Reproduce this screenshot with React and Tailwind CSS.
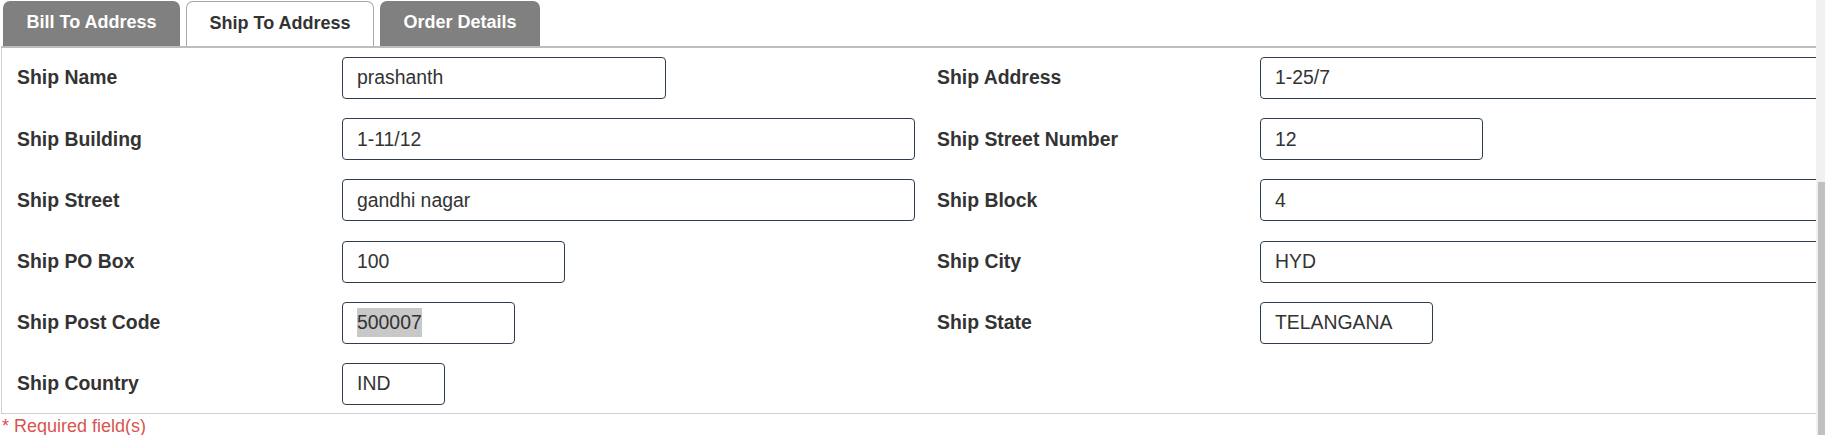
const tabs = [
  { label: 'Bill To Address', width: 'w-[177px]', active: false },
  { label: 'Ship To Address', width: 'w-[188px]', active: true },
  { label: 'Order Details', width: 'w-[160px]', active: false },
];

const rows = [
  {
    left: { label: 'Ship Name', value: 'prashanth', width: 'w-[324px]' },
    right: { label: 'Ship Address', value: '1-25/7', width: 'w-[620px]' },
  },
  {
    left: { label: 'Ship Building', value: '1-11/12', width: 'w-[573px]' },
    right: { label: 'Ship Street Number', value: '12', width: 'w-[223px]' },
  },
  {
    left: { label: 'Ship Street', value: 'gandhi nagar', width: 'w-[573px]' },
    right: { label: 'Ship Block', value: '4', width: 'w-[620px]' },
  },
  {
    left: { label: 'Ship PO Box', value: '100', width: 'w-[223px]' },
    right: { label: 'Ship City', value: 'HYD', width: 'w-[620px]' },
  },
  {
    left: { label: 'Ship Post Code', value: '500007', width: 'w-[173px]', selected: true },
    right: { label: 'Ship State', value: 'TELANGANA', width: 'w-[173px]' },
  },
  {
    left: { label: 'Ship Country', value: 'IND', width: 'w-[103px]' },
    right: null,
  },
];

const Field = ({ field }) => (
  <div
    className={`${field.width} h-[42px] border border-[#2e3e4f] rounded-[4px] bg-white flex items-center px-[14px] text-[19.4px] text-[#333]`}
  >
    {field.selected ? <span className="bg-[#c8c8c8]">{field.value}</span> : field.value}
  </div>
);

const Label = ({ children }) => (
  <div className="h-[42px] flex items-center font-bold text-[19.4px] text-[#333]">{children}</div>
);

export default function App() {
  return (
    <div className="h-[435px] w-full flex bg-white overflow-hidden font-['Liberation_Sans',Arial,sans-serif]">
      <div className="flex-1 min-w-0 overflow-hidden">
        <div className="flex gap-[6px] pl-[3px] pt-[1px] h-[46px]">
          {tabs.map((tab) => (
            <div
              key={tab.label}
              className={`${tab.width} h-[45px] rounded-t-[7px] flex items-center justify-center pb-[2px] font-bold text-[18px] ${
                tab.active
                  ? 'bg-white text-[#333] border border-b-0 border-[#a8a8a8]'
                  : 'bg-[#808080] text-white'
              }`}
            >
              {tab.label}
            </div>
          ))}
        </div>
        <div className="ml-[1px] w-[1900px] border-t-2 border-t-[#bdbdbd] border-l border-l-[#cfcfcf] border-b border-b-[#d0d0d0] pt-[9px] pb-[8px] pl-[15px]">
          <div className="grid grid-cols-[325px_595px_323px_1fr] gap-y-[19.2px]">
            {rows.map((row) => (
              <div key={row.left.label} className="contents">
                <Label>{row.left.label}</Label>
                <div className="flex items-center">
                  <Field field={row.left} />
                </div>
                {row.right ? <Label>{row.right.label}</Label> : <div />}
                <div className="flex items-center">{row.right && <Field field={row.right} />}</div>
              </div>
            ))}
          </div>
        </div>
        <div className="pl-[2px] pt-[2px] text-[18px] leading-[20px] text-[#d9534f]">* Required field(s)</div>
      </div>
      <div className="w-[9px] h-full bg-[#f1f1f1] flex flex-col">
        <div className="h-[182px]" />
        <div className="flex-1 ml-[2px] bg-[#c1c1c1]" />
      </div>
    </div>
  );
}
